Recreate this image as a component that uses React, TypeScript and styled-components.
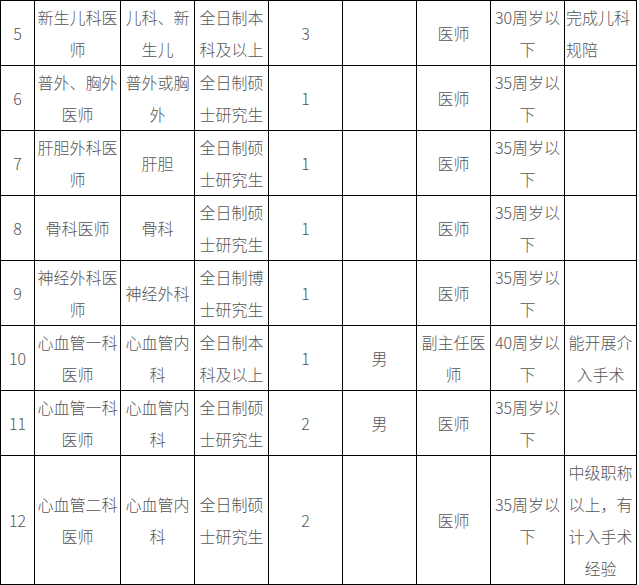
import { createGlobalStyle, styled } from "styled-components";

const GlobalStyle = createGlobalStyle`
  html, body {
    margin: 0;
    padding: 0;
    background: #ffffff;
  }
  body {
    font-family: "Noto Sans CJK SC", "Noto Sans", sans-serif;
  }
`;

const Table = styled.table`
  border-collapse: collapse;
  table-layout: fixed;
  width: 637px;
  color: #555555;
  font-size: 16px;
  font-weight: 300;
  line-height: 32px;
`;

const Row = styled.tr<{ $tall?: boolean }>`
  height: ${({ $tall }) => ($tall ? "129px" : "65px")};
`;

const Cell = styled.td<{ $left?: boolean }>`
  border: 1px solid #000000;
  padding: 0 1px;
  vertical-align: middle;
  text-align: ${({ $left }) => ($left ? "left" : "center")};
  word-break: break-all;
`;

const widths = [34, 86, 74, 74, 74, 74, 74, 74, 72];

type Item = {
  no: string;
  post: string;
  major: string;
  edu: string;
  count: string;
  sex: string;
  title: string;
  age: string;
  note: string;
  noteLeft?: boolean;
  tall?: boolean;
};

const rows: Item[] = [
  { no: "5", post: "新生儿科医师", major: "儿科、新生儿", edu: "全日制本科及以上", count: "3", sex: "", title: "医师", age: "30周岁以下", note: "完成儿科规陪", noteLeft: true },
  { no: "6", post: "普外、胸外医师", major: "普外或胸外", edu: "全日制硕士研究生", count: "1", sex: "", title: "医师", age: "35周岁以下", note: "" },
  { no: "7", post: "肝胆外科医师", major: "肝胆", edu: "全日制硕士研究生", count: "1", sex: "", title: "医师", age: "35周岁以下", note: "" },
  { no: "8", post: "骨科医师", major: "骨科", edu: "全日制硕士研究生", count: "1", sex: "", title: "医师", age: "35周岁以下", note: "" },
  { no: "9", post: "神经外科医师", major: "神经外科", edu: "全日制博士研究生", count: "1", sex: "", title: "医师", age: "35周岁以下", note: "" },
  { no: "10", post: "心血管一科医师", major: "心血管内科", edu: "全日制本科及以上", count: "1", sex: "男", title: "副主任医师", age: "40周岁以下", note: "能开展介入手术" },
  { no: "11", post: "心血管一科医师", major: "心血管内科", edu: "全日制硕士研究生", count: "2", sex: "男", title: "医师", age: "35周岁以下", note: "" },
  { no: "12", post: "心血管二科医师", major: "心血管内科", edu: "全日制硕士研究生", count: "2", sex: "", title: "医师", age: "35周岁以下", note: "中级职称以上，有计入手术经验", tall: true },
];

export default function App() {
  return (
    <>
      <GlobalStyle />
      <Table>
        <colgroup>
          {widths.map((w, i) => (
            <col key={i} style={{ width: w }} />
          ))}
        </colgroup>
        <tbody>
          {rows.map((r) => (
            <Row key={r.no} $tall={r.tall}>
              <Cell>{r.no}</Cell>
              <Cell>{r.post}</Cell>
              <Cell>{r.major}</Cell>
              <Cell>{r.edu}</Cell>
              <Cell>{r.count}</Cell>
              <Cell>{r.sex}</Cell>
              <Cell>{r.title}</Cell>
              <Cell>{r.age}</Cell>
              <Cell $left={r.noteLeft}>{r.note}</Cell>
            </Row>
          ))}
        </tbody>
      </Table>
    </>
  );
}
